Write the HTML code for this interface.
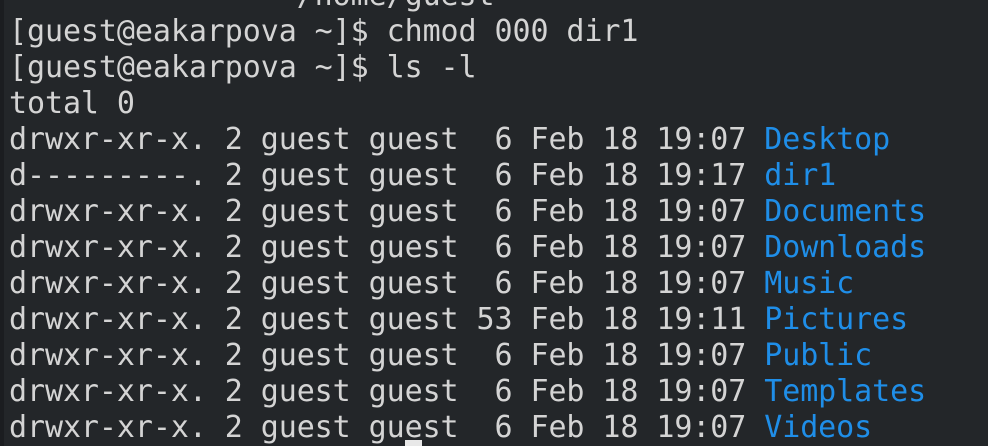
<!DOCTYPE html>
<html><head><style>
html,body{margin:0;padding:0;}
body{width:988px;height:446px;overflow:hidden;background:#232629;position:relative;}
.edge{position:absolute;left:0;top:0;width:4px;height:446px;background:#1b1d20;}
pre{position:absolute;left:9px;top:-22px;margin:0;font-family:"DejaVu Sans Mono","Liberation Mono",monospace;font-size:30px;line-height:36px;color:#d4d4d4;letter-spacing:-0.08px;}
.b{color:#1f8ee8;}
.cur{position:absolute;left:405px;top:440px;width:17px;height:6px;background:#e8e8e8;}
</style></head><body>
<div class="edge"></div>
<pre>                /home/guest
[guest@eakarpova ~]$ chmod 000 dir1
[guest@eakarpova ~]$ ls -l
total 0
drwxr-xr-x. 2 guest guest  6 Feb 18 19:07 <span class="b">Desktop</span>
d---------. 2 guest guest  6 Feb 18 19:17 <span class="b">dir1</span>
drwxr-xr-x. 2 guest guest  6 Feb 18 19:07 <span class="b">Documents</span>
drwxr-xr-x. 2 guest guest  6 Feb 18 19:07 <span class="b">Downloads</span>
drwxr-xr-x. 2 guest guest  6 Feb 18 19:07 <span class="b">Music</span>
drwxr-xr-x. 2 guest guest 53 Feb 18 19:11 <span class="b">Pictures</span>
drwxr-xr-x. 2 guest guest  6 Feb 18 19:07 <span class="b">Public</span>
drwxr-xr-x. 2 guest guest  6 Feb 18 19:07 <span class="b">Templates</span>
drwxr-xr-x. 2 guest guest  6 Feb 18 19:07 <span class="b">Videos</span></pre>
<div class="cur"></div>
</body></html>
